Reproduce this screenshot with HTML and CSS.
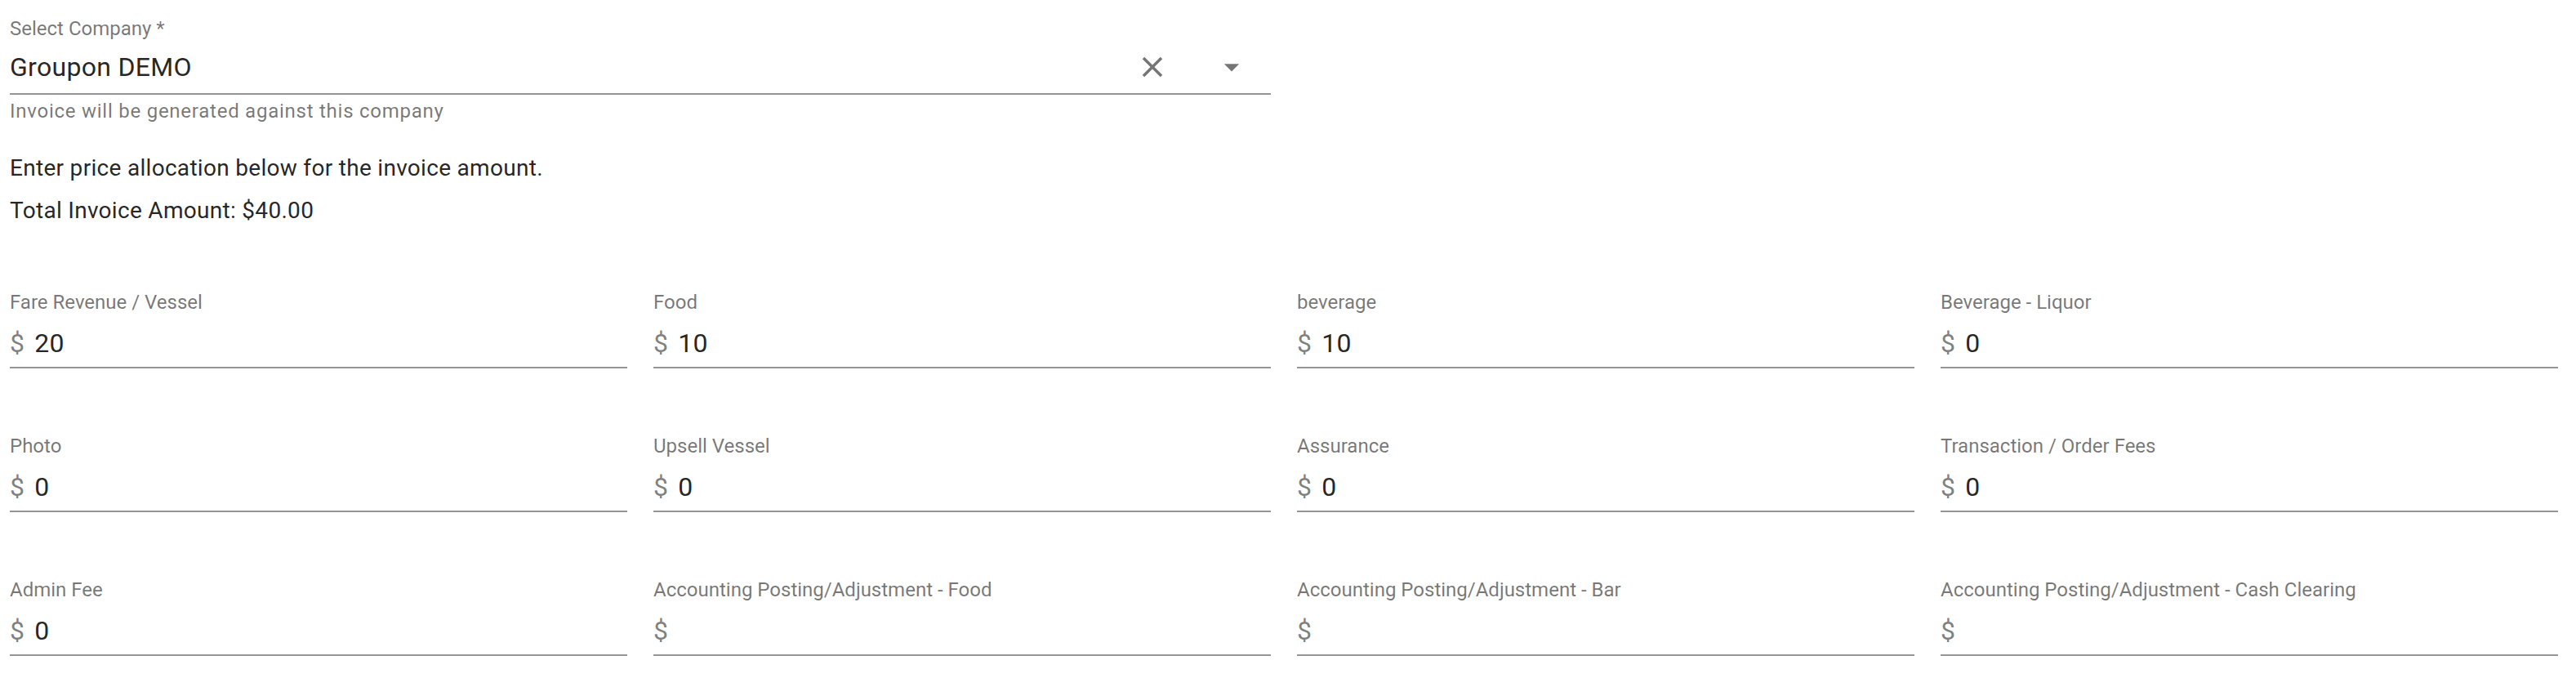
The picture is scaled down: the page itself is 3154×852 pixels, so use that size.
FILE: index.html
```html
<!DOCTYPE html>
<html lang="en">
<head>
  <meta charset="UTF-8">
  <meta name="viewport" content="width=device-width, initial-scale=1.0">
  <title>Invoice Allocation</title>
  <link rel="stylesheet" href="styles.css">
</head>
<body>
  <div class="page">
    <div class="grid">
      <div class="field company">
        <label class="field-label">Select Company *</label>
        <div class="input-row">
          <span class="value">Groupon DEMO</span>
          <div class="adorn">
            <span class="icon-btn clear">
              <svg viewBox="0 0 24 24" width="42" height="42"><path d="M19 6.41L17.59 5 12 10.59 6.41 5 5 6.41 10.59 12 5 17.59 6.41 19 12 13.41 17.59 19 19 17.59 13.41 12z"/></svg>
            </span>
            <span class="icon-btn popup">
              <svg viewBox="0 0 24 24" width="44" height="44"><path d="M7 10l5 5 5-5z"/></svg>
            </span>
          </div>
        </div>
        <p class="helper">Invoice will be generated against this company</p>
      </div>
    </div>

    <p class="note first">Enter price allocation below for the invoice amount.</p>
    <p class="note">Total Invoice Amount: $40.00</p>

    <div class="grid amounts">
      <div class="field">
        <label class="field-label">Fare Revenue / Vessel</label>
        <div class="input-row"><span class="dollar">$</span><span class="value">20</span></div>
      </div>
      <div class="field">
        <label class="field-label">Food</label>
        <div class="input-row"><span class="dollar">$</span><span class="value">10</span></div>
      </div>
      <div class="field">
        <label class="field-label">beverage</label>
        <div class="input-row"><span class="dollar">$</span><span class="value">10</span></div>
      </div>
      <div class="field">
        <label class="field-label">Beverage - Liquor</label>
        <div class="input-row"><span class="dollar">$</span><span class="value">0</span></div>
      </div>

      <div class="field">
        <label class="field-label">Photo</label>
        <div class="input-row"><span class="dollar">$</span><span class="value">0</span></div>
      </div>
      <div class="field">
        <label class="field-label">Upsell Vessel</label>
        <div class="input-row"><span class="dollar">$</span><span class="value">0</span></div>
      </div>
      <div class="field">
        <label class="field-label">Assurance</label>
        <div class="input-row"><span class="dollar">$</span><span class="value">0</span></div>
      </div>
      <div class="field">
        <label class="field-label">Transaction / Order Fees</label>
        <div class="input-row"><span class="dollar">$</span><span class="value">0</span></div>
      </div>

      <div class="field">
        <label class="field-label">Admin Fee</label>
        <div class="input-row"><span class="dollar">$</span><span class="value">0</span></div>
      </div>
      <div class="field">
        <label class="field-label">Accounting Posting/Adjustment - Food</label>
        <div class="input-row"><span class="dollar">$</span><span class="value"></span></div>
      </div>
      <div class="field">
        <label class="field-label">Accounting Posting/Adjustment - Bar</label>
        <div class="input-row"><span class="dollar">$</span><span class="value"></span></div>
      </div>
      <div class="field">
        <label class="field-label">Accounting Posting/Adjustment - Cash Clearing</label>
        <div class="input-row"><span class="dollar">$</span><span class="value"></span></div>
      </div>
    </div>
  </div>
</body>
</html>
```

FILE: styles.css
```css
body {
  margin: 0;
  padding: 0;
  background: #fff;
  font-family: Roboto, 'Liberation Sans', sans-serif;
  color: rgba(0, 0, 0, 0.87);
}
.page {
  width: 3120px;
  padding: 23px 0 0 12px;
}
.grid {
  display: grid;
  grid-template-columns: repeat(4, 1fr);
  column-gap: 32px;
  row-gap: 83px;
}
.field {
  display: flex;
  flex-direction: column;
}
.field.company {
  grid-column: span 2;
}
.field-label {
  font-size: 24px;
  line-height: 24px;
  color: rgba(0, 0, 0, 0.54);
  margin-bottom: 19px;
}
.company .field-label {
  margin-bottom: 16px;
}
.input-row {
  display: flex;
  align-items: center;
  height: 38px;
  padding-bottom: 10px;
  border-bottom: 2px solid rgba(0, 0, 0, 0.42);
  font-size: 32px;
  line-height: 38px;
  letter-spacing: 0.3px;
}
.company .input-row {
  padding-bottom: 13px;
}
.value {
  color: rgba(0, 0, 0, 0.87);
}
.dollar {
  color: rgba(0, 0, 0, 0.5);
  margin-right: 12px;
}
.adorn {
  margin-left: auto;
  margin-right: 26px;
  display: flex;
  align-items: center;
  gap: 54px;
}
.icon-btn {
  display: flex;
}
.icon-btn svg {
  fill: rgba(0, 0, 0, 0.54);
}
.helper {
  margin: 8px 0 0;
  font-size: 24px;
  line-height: 24px;
  letter-spacing: 0.75px;
  color: rgba(0, 0, 0, 0.54);
}
.note {
  margin: 12px 0 0;
  font-size: 28px;
  line-height: 40px;
  letter-spacing: 0.3px;
}
.note.first {
  margin-top: 38px;
}
.amounts {
  margin-top: 80px;
}
```
